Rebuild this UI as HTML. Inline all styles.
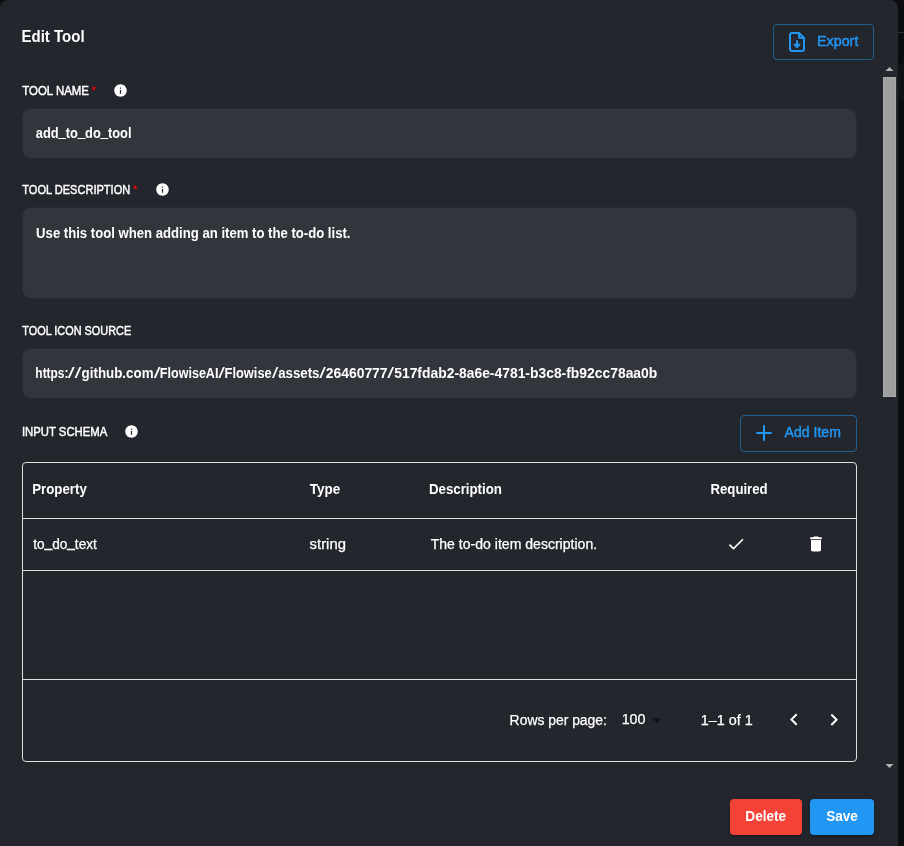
<!DOCTYPE html>
<html lang="en">
<head>
<meta charset="utf-8">
<title>Edit Tool</title>
<style>
  html, body { margin: 0; padding: 0; }
  body {
    width: 904px; height: 846px; overflow: hidden; position: relative;
    background: #0b0c0e;
    font-family: "Liberation Sans", sans-serif;
    color: #fff;
  }
  .backdrop-line { position: absolute; left: 898px; top: 32px; width: 6px; height: 1px; background: #2a2c30; }
  .backdrop-card { position: absolute; left: 899px; top: 63px; width: 20px; height: 37px; box-sizing: border-box; border: 1px solid #161b20; border-radius: 6px; background: #0b1116; }
  .dialog {
    position: absolute; left: 0; top: 0; width: 898px; height: 900px;
    background: #23262c; border-radius: 8px; will-change: transform;
  }
  .t { position: absolute; white-space: nowrap; line-height: 1; margin: 0; transform-origin: 0 50%; }
  .b { font-weight: 700; }
  .r { font-weight: 400; -webkit-text-stroke: 0.25px currentColor; }
  .m { font-weight: 400; -webkit-text-stroke: 0.45px currentColor; }
  .ub { position: relative; top: -0.8px; -webkit-text-stroke: 0.5px currentColor; }
  .ur { position: relative; top: -2px; -webkit-text-stroke: 0.45px currentColor; }
  .req { color: #ff0000; }
  .blue { color: #2196f3; }
  .field { position: absolute; left: 22px; width: 835px; box-sizing: border-box; background: #32353b; border: 1px solid #282b31; border-radius: 9px; }
  .btn-outline {
    position: absolute; box-sizing: border-box; border: 1px solid rgba(33,150,243,0.5);
    border-radius: 4px;
  }
  .info { position: absolute; }
  .table { position: absolute; left: 22px; top: 462px; width: 835px; height: 300px; box-sizing: border-box; border: 1px solid #e0e0e0; border-radius: 4px; }
  .hr { position: absolute; left: 22px; width: 835px; height: 1px; background: #e0e0e0; }
  .btn { position: absolute; border-radius: 4px; box-shadow: 0 3px 1px -2px rgba(0,0,0,.2), 0 2px 2px 0 rgba(0,0,0,.14), 0 1px 5px 0 rgba(0,0,0,.12); }
  .sb-thumb { position: absolute; left: 883px; top: 77px; width: 13px; height: 320px; box-sizing: border-box; background: #9f9f9f; border: 1px solid #a9a9a9; }
  .abs { position: absolute; }
</style>
</head>
<body>
<div class="backdrop-line"></div>
<div class="backdrop-card"></div>
<div class="dialog">
  <h2 class="t b" id="title" style="left:21px;top:29px;font-size:16px;transform:translateX(0.46px) scaleX(0.9387);">Edit Tool</h2>

  <div class="btn-outline" style="left:773px;top:24px;width:101px;height:36px;"></div>
  <svg class="abs" style="left:785px;top:30px" width="24" height="24" viewBox="0 0 24 24" fill="none" stroke="#2196f3" stroke-width="2" stroke-linecap="round" stroke-linejoin="round"><path d="M14 3v4a1 1 0 0 0 1 1h4"/><path d="M17 21h-10a2 2 0 0 1 -2 -2v-14a2 2 0 0 1 2 -2h7l5 5v11a2 2 0 0 1 -2 2z"/><path d="M12 11v6"/><path d="M9.500 14.500l2.500 2.500l2.500 -2.500"/></svg>
  <span class="t m blue" id="export" style="left:816px;top:34px;font-size:14px;transform:translateX(0.99px) scaleX(1.0226);">Export</span>

  <span class="t m" id="l1" style="left:22px;top:85px;font-size:12.6px;transform:translateX(0.25px) scaleX(0.9074);">TOOL NAME</span><span class="t req" id="a1" style="left:91px;top:84px;font-size:13px;transform:translateX(0.26px) scaleX(1);">*</span>
  <svg class="info" style="left:113.0px;top:82.9px;width:15px;height:15px" viewBox="0 0 24 24"><path fill="#fff" d="M12 2C6.48 2 2 6.48 2 12s4.480 10 10 10 10-4.480 10-10S17.520 2 12 2zm1 15h-2v-6h2v6zm0-8h-2V7h2v2z"/></svg>
  <div class="field" style="top:108px;height:51px;"></div>
  <span class="t b" id="v1" style="left:35px;top:126px;font-size:14px;transform:translateX(0.74px) scaleX(0.9184);">add<span class="ub">_</span>to<span class="ub">_</span>do<span class="ub">_</span>tool</span>

  <span class="t m" id="l2" style="left:22px;top:184px;font-size:12.6px;transform:translateX(0.26px) scaleX(0.8763);">TOOL DESCRIPTION</span><span class="t req" id="a2" style="left:132px;top:183px;font-size:13px;transform:translateX(0.83px) scaleX(1);">*</span>
  <svg class="info" style="left:154.8px;top:181.9px;width:15px;height:15px" viewBox="0 0 24 24"><path fill="#fff" d="M12 2C6.48 2 2 6.48 2 12s4.480 10 10 10 10-4.480 10-10S17.520 2 12 2zm1 15h-2v-6h2v6zm0-8h-2V7h2v2z"/></svg>
  <div class="field" style="top:207px;height:92px;"></div>
  <span class="t b" id="v2" style="left:36px;top:226px;font-size:14px;transform:translateX(0.1px) scaleX(0.9378);">Use this tool when adding an item to the to-do list.</span>

  <span class="t m" id="l3" style="left:22px;top:325px;font-size:12.6px;transform:translateX(0.26px) scaleX(0.8648);">TOOL ICON SOURCE</span>
  <div class="field" style="top:348px;height:51px;"></div>
  <div><span class="t b" id="u0" style="left:35px;top:366px;font-size:14px;transform:translateX(0.36px) scaleX(0.8501);">https:</span><span class="t n" id="s0" style="left:67px;top:366px;font-size:14px;transform:translateX(0.69px) scaleX(1.7703);">//</span><span class="t b" id="u1" style="left:81px;top:366px;font-size:14px;transform:translateX(0.56px) scaleX(0.9543);">github.com</span><span class="t n" id="s1" style="left:153px;top:366px;font-size:14px;transform:translateX(0.82px) scaleX(1.7299);">/</span><span class="t b" id="u2" style="left:159px;top:366px;font-size:14px;transform:translateX(0.78px) scaleX(0.8977);">FlowiseAI</span><span class="t n" id="s2" style="left:218px;top:366px;font-size:14px;transform:translateX(0.19px) scaleX(1.7042);">/</span><span class="t b" id="u3" style="left:224px;top:366px;font-size:14px;transform:translateX(0.6px) scaleX(0.9175);">Flowise</span><span class="t n" id="s3" style="left:271px;top:366px;font-size:14px;transform:translateX(0.98px) scaleX(1.6215);">/</span><span class="t b" id="u4" style="left:278px;top:366px;font-size:14px;transform:translateX(0.24px) scaleX(0.9453);">assets</span><span class="t n" id="s4" style="left:319px;top:366px;font-size:14px;transform:translateX(0.33px) scaleX(1.6863);">/</span><span class="t b" id="u5" style="left:325px;top:366px;font-size:14px;transform:translateX(0.71px) scaleX(0.9933);">26460777</span><span class="t n" id="s5" style="left:387px;top:366px;font-size:14px;transform:translateX(0.3px) scaleX(1.7597);">/</span><span class="t b" id="u6" style="left:394px;top:366px;font-size:14px;transform:translateX(0.22px) scaleX(0.9912);">517fdab2-8a6e-4781-b3c8-fb92cc78aa0b</span></div>

  <span class="t m" id="l4" style="left:21px;top:426px;font-size:12.6px;transform:translateX(0.88px) scaleX(0.9006);">INPUT SCHEMA</span>
  <svg class="info" style="left:123.9px;top:424.1px;width:15px;height:15px" viewBox="0 0 24 24"><path fill="#fff" d="M12 2C6.48 2 2 6.48 2 12s4.480 10 10 10 10-4.480 10-10S17.520 2 12 2zm1 15h-2v-6h2v6zm0-8h-2V7h2v2z"/></svg>

  <div class="btn-outline" style="left:740px;top:415px;width:117px;height:37px;"></div>
  <svg class="abs" style="left:752px;top:421px" width="24" height="24" viewBox="0 0 24 24" fill="none" stroke="#2196f3" stroke-width="2" stroke-linecap="round" stroke-linejoin="round"><path d="M12 5v14"/><path d="M5 12h14"/></svg>
  <span class="t m blue" id="additem" style="left:784px;top:425px;font-size:14px;transform:translateX(0.62px) scaleX(1.0039);">Add Item</span>

  <div class="table"></div>
  <div class="hr" style="top:518px"></div>
  <div class="hr" style="top:570px"></div>
  <div class="hr" style="top:679px"></div>

  <span class="t b" id="h1" style="left:32px;top:482px;font-size:14px;transform:translateX(0.14px) scaleX(0.9495);">Property</span>
  <span class="t b" id="h2" style="left:309px;top:482px;font-size:14px;transform:translateX(0.78px) scaleX(0.9626);">Type</span>
  <span class="t b" id="h3" style="left:428px;top:482px;font-size:14px;transform:translateX(0.9px) scaleX(0.9487);">Description</span>
  <span class="t b" id="h4" style="left:710px;top:482px;font-size:14px;transform:translateX(0.48px) scaleX(0.942);">Required</span>

  <span class="t r" id="c1" style="left:33px;top:537px;font-size:14px;transform:translateX(0.2px) scaleX(0.9722);">to<span class="ur">_</span>do<span class="ur">_</span>text</span>
  <span class="t r" id="c2" style="left:309px;top:537px;font-size:14px;transform:translateX(0.58px) scaleX(1.0608);">string</span>
  <span class="t r" id="c3" style="left:430px;top:537px;font-size:14px;transform:translateX(0.71px) scaleX(1.0041);">The to-do item description.</span>
  <svg class="abs" style="left:726px;top:534px" width="20" height="20" viewBox="0 0 24 24"><path fill="#fff" d="M9 16.170 4.830 12l-1.420 1.410L9 19 21 7l-1.410-1.410z"/></svg>
  <svg class="abs" style="left:806px;top:534px" width="20" height="20" viewBox="0 0 24 24"><path fill="#fff" d="M6 19c0 1.100.9 2 2 2h8c1.100 0 2-.9 2-2V7H6v12zM19 4h-3.500l-1-1h-5l-1 1H5v2h14V4z"/></svg>

  <span class="t r" id="f1" style="left:509px;top:713px;font-size:14px;transform:translateX(0.62px) scaleX(0.9921);">Rows per page:</span>
  <span class="t r" id="f2" style="left:621px;top:712px;font-size:14px;transform:translateX(0.64px) scaleX(1.0215);">100</span>
  <svg class="abs" style="left:645px;top:708px" width="24" height="24" viewBox="0 0 24 24"><path fill="#121317" d="M7 10l5 5 5-5z"/></svg>
  <span class="t r" id="f3" style="left:700px;top:713px;font-size:14px;transform:translateX(0.82px) scaleX(1.0274);">1–1 of 1</span>
  <svg class="abs" style="left:782px;top:708px" width="24" height="24" viewBox="0 0 24 24"><path fill="#fff" d="M15.410 16.090l-4.580-4.590 4.580-4.590L14 5.500l-6 6 6 6z"/></svg>
  <svg class="abs" style="left:822px;top:708px" width="24" height="24" viewBox="0 0 24 24"><path fill="#fff" d="M8.590 16.340l4.580-4.590-4.580-4.590L10 5.750l6 6-6 6z"/></svg>

  <div class="btn" style="left:730px;top:799px;width:72px;height:36px;background:#f44336;"></div>
  <span class="t b" id="del" style="left:745px;top:809px;font-size:14px;transform:translateX(0.36px) scaleX(0.9707);">Delete</span>
  <div class="btn" style="left:810px;top:799px;width:64px;height:36px;background:#2196f3;"></div>
  <span class="t b" id="save" style="left:826px;top:809px;font-size:14px;transform:translateX(0.22px) scaleX(0.9677);">Save</span>

  <svg class="abs" style="left:880px;top:60px" width="18" height="16" viewBox="0 0 18 16"><path fill="#b4b4b4" d="M5.500 11h8l-4-4z"/></svg>
  <div class="sb-thumb"></div>
  <svg class="abs" style="left:880px;top:758px" width="18" height="16" viewBox="0 0 18 16"><path fill="#b4b4b4" d="M5.500 6h8l-4 4z"/></svg>
</div>
</body>
</html>
